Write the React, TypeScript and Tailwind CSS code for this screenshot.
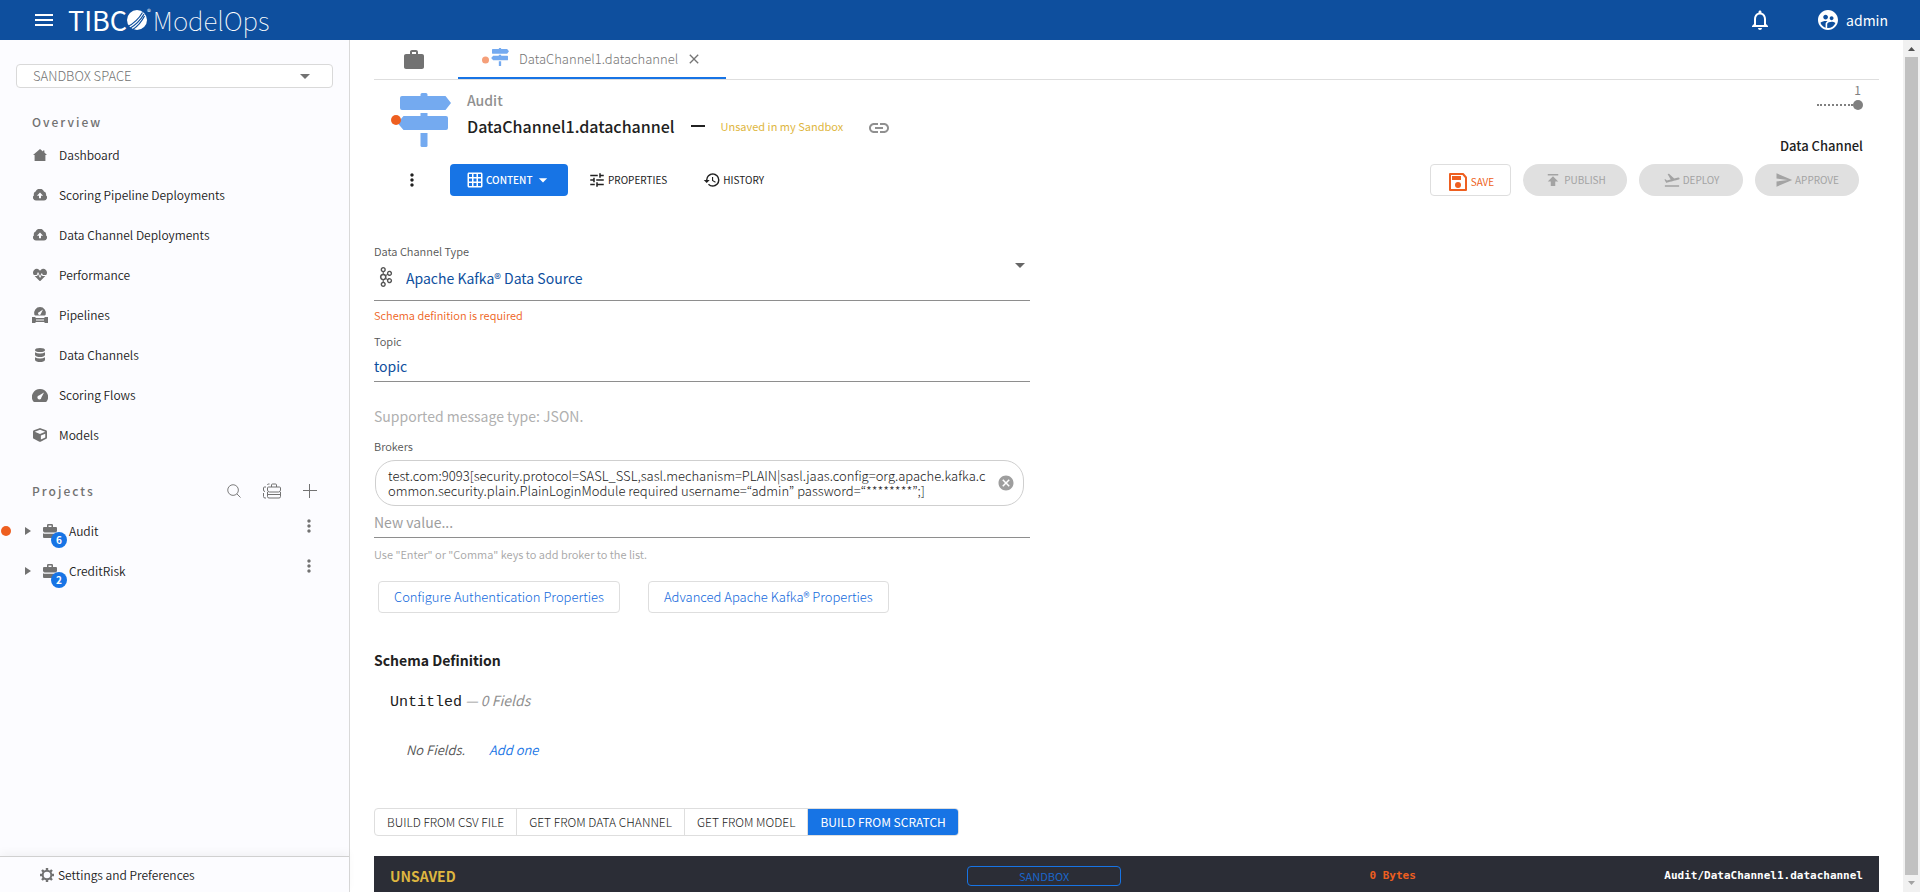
import React, { useState } from 'react';
import {
  MdArrowDropDown,
  MdFlightTakeoff,
  MdGridOn,
  MdHistory,
  MdLink,
  MdMenu,
  MdMoreVert,
  MdNotificationsNone,
  MdPublish,
  MdSend,
  MdSupervisedUserCircle,
  MdTune,
  MdWork,
  MdClose,
  MdCancel,
} from 'react-icons/md';
import { SiApachekafka } from 'react-icons/si';
import { FaHeartbeat, FaCube } from 'react-icons/fa';

type IconProps = { className?: string };

const HomeIcon = ({ className }: IconProps) => (
  <svg viewBox="0 0 14 12" className={className} fill="currentColor">
    <path d="M7 0l3 2.4V1.600h1.400v2L14 6h-1.600v6H1.600V6H0z" />
  </svg>
);

const CloudUpIcon = ({ className }: IconProps) => (
  <svg viewBox="0 0 14 12" className={className} fill="currentColor">
    <path
      fillRule="evenodd"
      d="M3 11.500A3 3 0 0 1 1 6.200 2.800 2.800 0 0 1 2.600 2.600 4.500 4.500 0 0 1 11 2.600 3 3 0 0 1 13 6.200 3 3 0 0 1 11 11.500zM7 3.400L3.900 6.700H6V9.300h2V6.700h2.100z"
    />
  </svg>
);

const GaugeIcon = ({ className }: IconProps) => (
  <svg viewBox="0 0 16 13" className={className} fill="currentColor">
    <path
      fillRule="evenodd"
      d="M8 0a8 8 0 0 1 7 12q-.5 1-1.400 1H2.400Q1.500 13 1 12A8 8 0 0 1 8 0zM12 3.600L7 6.600a2 2 0 1 0 2.400 2z"
    />
  </svg>
);

const PipelineIcon = ({ className }: IconProps) => (
  <svg viewBox="0 0 16 16" className={className} fill="currentColor">
    <path
      fillRule="evenodd"
      d="M8 0a6 6 0 0 1 5.700 7.600q-.3 1-1.200 1H3.500q-.9 0-1.200-1A6 6 0 0 1 8 0zM11 2.600L7.300 5a1.500 1.500 0 1 0 1.700 1.600z"
    />
    <path fillRule="evenodd" d="M0 10h3.500v1h9v-1H16v6h-3.500v-1h-9v1H0zM4 12.500v1h8v-1z" />
  </svg>
);

const DatabaseIcon = ({ className }: IconProps) => (
  <svg viewBox="0 0 10 14" className={className} fill="currentColor">
    <ellipse cx="5" cy="2" rx="5" ry="2" />
    <path d="M0 4.200Q2 5.500 5 5.500T10 4.200V7Q9 9 5 9T0 7z" />
    <path d="M0 9.200Q2 10.500 5 10.500T10 9.200V12Q9 14 5 14T0 12z" />
  </svg>
);

const GearIcon = ({ className }: IconProps) => (
  <svg viewBox="0 0 14 14" className={className} fill="none" stroke="currentColor">
    <circle cx="7" cy="7" r="4.300" strokeWidth="2" />
    <path
      strokeWidth="2.400"
      d="M7 0v2.500M7 11.500V14M0 7h2.500M11.500 7H14M2 2l1.800 1.800M10.200 10.200L12 12M12 2l-1.800 1.800M3.800 10.200L2 12"
    />
  </svg>
);

const BriefcaseIcon = ({ className }: IconProps) => (
  <svg viewBox="0 0 14 14" className={className} fill="currentColor">
    <path
      fillRule="evenodd"
      d="M4 3V1.200Q4 0 5.200 0h3.600Q10 0 10 1.200V3h3q1 0 1 1v3Q13.500 8.500 12 8.500H2Q.5 8.500 0 7V4q0-1 1-1zM5.500 3h3V1.500h-3z"
    />
    <path d="M0 9.200q1 .6 2 .6h10q1 0 2-.6V13q0 1-1 1H1q-1 0-1-1z" />
  </svg>
);

const ProjectsIcon = ({ className }: IconProps) => (
  <svg viewBox="0 0 18 15" className={className} fill="none" stroke="currentColor">
    <path d="M8.500 3.500V1.500q0-1 1-1h3q1 0 1 1v2M5.500 3.500h11q1 0 1 1v2q0 2-2 2h-9q-2 0-2-2v-2q0-1 1-1zM4.500 8.500V13q0 1.500 1.500 1.500h10q1.500 0 1.500-1.500V8.500M4.500 11h13" />
    <path d="M6.500 .5H5.500q-1 0-1 1M3 3.500H1.500q-1 0-1 1v2q0 1.500 1.500 1.500M.5 9.500V13q0 1.500 1.500 1.500h1" />
  </svg>
);

const SearchIcon = ({ className }: IconProps) => (
  <svg viewBox="0 0 15 15" className={className} fill="none" stroke="currentColor">
    <circle cx="6.500" cy="6.500" r="5.700" />
    <path d="M10.600 10.600L14.500 14.500" />
  </svg>
);

const PlusIcon = ({ className }: IconProps) => (
  <svg viewBox="0 0 14 14" className={className} fill="none" stroke="currentColor">
    <path d="M6.500 0v14M0 6.500h14" />
  </svg>
);

const SignBoards = () => (
  <g fill="#74aaf0">
    <path d="M29.500 3V1.500q0-1.500 1.500-1.500h4q1.500 0 1.500 1.500V3h18l5.500 7-5.500 7H11q-2 0-2-2V5q0-2 2-2z" />
    <path d="M29.500 20h7v3H55q2 0 2 2v10q0 2-2 2H12.500l-6-7 6-7h17z" />
    <path d="M29.500 40h7v12.500q0 1.500-1.500 1.500h-4q-1.500 0-1.500-1.500z" />
  </g>
);

const SignpostIcon = ({ className }: IconProps) => (
  <svg viewBox="0 0 60 54" className={className}>
    <SignBoards />
    <circle cx="5" cy="27" r="5" fill="#ee5f20" />
  </svg>
);

const TabSignpostIcon = ({ className }: IconProps) => (
  <svg viewBox="0 0 27 18" className={className}>
    <g transform="translate(7 0) scale(0.333)">
      <SignBoards />
    </g>
    <circle cx="3.500" cy="12" r="3.500" fill="#f59f79" />
  </svg>
);

const SaveIcon = ({ className }: IconProps) => (
  <svg viewBox="0 0 18 18" className={className} fill="currentColor">
    <path d="M1 1h13l3 3.500V17H1z" fill="none" stroke="currentColor" strokeWidth="2" strokeLinejoin="round" />
    <path d="M3 3h9v4H3z" />
    <circle cx="9" cy="12" r="3" />
  </svg>
);

const GlobeMark = ({ className }: IconProps) => (
  <svg viewBox="0 0 20 20" className={className}>
    <circle cx="10" cy="10" r="10" fill="#fff" />
    <path d="M0 17Q10 12 15.500 2.500M2 19Q12 13 17 4M5 20Q13 15 17.500 6" fill="none" stroke="#0e4f9e" strokeWidth="1.200" />
  </svg>
);

const overviewItems = [
  { label: 'Dashboard', icon: <HomeIcon className="w-3.5 h-3" /> },
  { label: 'Scoring Pipeline Deployments', icon: <CloudUpIcon className="w-3.5 h-3" /> },
  { label: 'Data Channel Deployments', icon: <CloudUpIcon className="w-3.5 h-3" /> },
  { label: 'Performance', icon: <FaHeartbeat className="w-3.5 h-3.5" /> },
  { label: 'Pipelines', icon: <PipelineIcon className="w-4 h-4" /> },
  { label: 'Data Channels', icon: <DatabaseIcon className="w-2.5 h-3.5" /> },
  { label: 'Scoring Flows', icon: <GaugeIcon className="w-4 h-[13px]" /> },
  { label: 'Models', icon: <FaCube className="w-3.5 h-3.5" /> },
];

const projects = [
  { name: 'Audit', count: 6, dirty: true },
  { name: 'CreditRisk', count: 2, dirty: false },
];

const schemaSources = ['BUILD FROM CSV FILE', 'GET FROM DATA CHANNEL', 'GET FROM MODEL', 'BUILD FROM SCRATCH'];

const TopBar = () => (
  <header className="h-10 shrink-0 bg-[#0e4f9e] text-white flex items-center justify-between px-8">
    <div className="flex items-center">
      <button aria-label="Menu" className="mr-3">
        <MdMenu className="w-6 h-6" />
      </button>
      <div className="flex items-center">
        <span className="text-[27px] leading-10">TIBC</span>
        <GlobeMark className="w-5 h-5" />
        <span className="text-[8px] leading-3 self-start mt-1.5 mr-0.5">®</span>
        <span className="text-[26px] leading-10 font-thin">ModelOps</span>
      </div>
    </div>
    <div className="flex items-center gap-11">
      <button aria-label="Notifications">
        <MdNotificationsNone className="w-6 h-6" />
      </button>
      <button className="flex items-center gap-1.5">
        <MdSupervisedUserCircle className="w-6 h-6" />
        <span className="text-sm leading-5">admin</span>
      </button>
    </div>
  </header>
);

const Sidebar = () => (
  <aside className="w-[350px] shrink-0 bg-[#fcfcff] border-r border-[#d9d9d9] flex flex-col text-[#727272]">
    <div className="flex-1 pt-6">
      <div className="mx-4 relative">
        <select
          aria-label="Space"
          className="block w-full h-6 pl-4 text-[13px] leading-5 font-light appearance-none bg-white border border-[#d9d9d9] rounded"
        >
          <option>SANDBOX SPACE</option>
        </select>
        <MdArrowDropDown className="absolute right-4 top-0 w-6 h-6 pointer-events-none" />
      </div>

      <h2 className="mt-5 px-8 h-[27px] flex items-center text-xs leading-5 font-medium tracking-[2px]">Overview</h2>
      <nav>
        {overviewItems.map((item) => (
          <a key={item.label} href="#" className="h-10 pl-8 flex items-center">
            <span className="w-4 mr-[11px] flex justify-center">{item.icon}</span>
            <span className="text-xs leading-5 font-[350] text-[#212121]">{item.label}</span>
          </a>
        ))}
      </nav>

      <div className="mt-5 mb-1 px-8 h-8 flex items-center justify-between">
        <h2 className="text-xs leading-5 font-medium tracking-[2px]">Projects</h2>
        <div className="flex items-center gap-[22px]">
          <button aria-label="Search projects">
            <SearchIcon className="w-3.5 h-3.5" />
          </button>
          <button aria-label="All projects">
            <ProjectsIcon className="w-[18px] h-4" />
          </button>
          <button aria-label="Add project">
            <PlusIcon className="w-3.5 h-3.5" />
          </button>
        </div>
      </div>
      {projects.map((project) => (
        <div key={project.name} className="h-10 pr-[30px] flex items-center">
          <span className={project.dirty ? 'w-2.5 h-2.5 ml-px rounded-full bg-[#ee5f20]' : 'w-2.5 h-2.5 ml-px'} />
          <button aria-label="Expand" className="ml-3.5 mr-3">
            <svg viewBox="0 0 6 8" className="w-1.5 h-2" fill="currentColor">
              <path d="M0 0l6 4-6 4z" />
            </svg>
          </button>
          <span className="relative w-[26px]">
            <BriefcaseIcon className="w-3.5 h-3.5" />
            <span className="absolute left-2 top-2 w-4 h-4 rounded-full bg-[#1774e5] text-white text-[10px] leading-4 font-bold text-center">
              {project.count}
            </span>
          </span>
          <span className="flex-1 text-xs leading-5 font-[350] text-[#212121]">{project.name}</span>
          <button aria-label={project.name + ' actions'} className="pb-2.5">
            <MdMoreVert className="w-5 h-5" />
          </button>
        </div>
      ))}
    </div>
    <a
      href="#"
      className="h-9 shrink-0 pl-10 pt-px flex items-center gap-1 border-t border-[#d0d0d0] bg-[#fcfcff] shadow-[0_-4px_8px_rgba(0,0,0,0.04)]"
    >
      <GearIcon className="w-3.5 h-3.5" />
      <span className="text-xs leading-5 font-[350] text-[#212121]">Settings and Preferences</span>
    </a>
  </aside>
);

const TabBar = () => (
  <div className="h-10 border-b border-[#dedede] flex">
    <button aria-label="Projects" className="w-21 pr-1 flex items-center justify-center text-[#727272]">
      <MdWork className="w-6 h-6" />
    </button>
    <div className="w-[268px] border-b-2 border-[#1774e5] flex items-center pl-6 text-[#757575]">
      <TabSignpostIcon className="w-[27px] h-[18px] mb-1 mr-2.5" />
      <span className="text-[13px] leading-5 font-light">DataChannel1.datachannel</span>
      <button aria-label="Close tab" className="ml-2">
        <MdClose className="w-4 h-4" />
      </button>
    </div>
  </div>
);

const FileHeader = () => (
  <div className="flex justify-between pr-4">
    <div className="flex items-start pl-[17px]">
      <SignpostIcon className="mt-[13px] w-[60px] h-[54px]" />
      <div className="pt-2.5 ml-4">
        <div className="text-sm leading-5 font-medium text-[#909090]">Audit</div>
        <div className="mt-0.5 flex items-center">
          <h1 className="text-base leading-7 font-medium text-[#212121]">DataChannel1.datachannel</h1>
          <span className="w-3.5 h-0.5 mx-4 bg-[#212121]" />
          <span className="text-[11px] leading-5 text-[#deb640]">Unsaved in my Sandbox</span>
          <button aria-label="Copy link" className="ml-6 pt-1 text-[#909090]">
            <MdLink className="w-6 h-6" />
          </button>
        </div>
      </div>
    </div>
    <div className="pt-1 flex flex-col items-end">
      <div className="flex flex-col items-end text-[#808080]">
        <span className="text-xs leading-3 pr-0.5">1</span>
        <div className="mt-1 flex items-center">
          <span className="w-9 border-t-2 border-dotted border-[#808080]" />
          <span className="w-2.5 h-2.5 rounded-full bg-[#808080]" />
        </div>
      </div>
      <div className="mt-6 text-[13px] leading-6 font-medium text-[#212121]">Data Channel</div>
    </div>
  </div>
);

const Toolbar = () => {
  const disabledAction =
    'w-26 h-8 rounded-full bg-[#e0e0e0] text-[#a3a3a3] text-[10px] leading-4 flex items-center justify-center gap-0.5';

  return (
    <div className="mt-1.5 pr-5 h-8 flex items-center justify-between text-[10px] leading-4">
      <div className="flex items-center">
        <button aria-label="More" className="mx-7 text-[#212121]">
          <MdMoreVert className="w-5 h-5" />
        </button>
        <button className="w-[118px] h-8 rounded bg-[#1774e5] text-white font-medium flex items-center pl-4">
          <MdGridOn className="w-[18px] h-[18px] mr-0.5" />
          CONTENT
          <MdArrowDropDown className="w-5 h-5" />
        </button>
        <button className="ml-5 flex items-center gap-0.5 text-[#212121]">
          <MdTune className="w-[18px] h-[18px]" />
          PROPERTIES
        </button>
        <button className="ml-9 flex items-center gap-0.5 text-[#212121]">
          <MdHistory className="w-[18px] h-[18px]" />
          HISTORY
        </button>
      </div>
      <div className="flex items-center gap-3">
        <button className="w-[81px] h-8 pt-1 pl-0.5 rounded border border-[#dedede] text-[#ee5f20] flex items-center justify-center gap-1">
          <SaveIcon className="w-[18px] h-[18px]" />
          SAVE
        </button>
        <button disabled className={disabledAction}>
          <MdPublish className="w-[18px] h-[18px]" />
          PUBLISH
        </button>
        <button disabled className={disabledAction}>
          <MdFlightTakeoff className="w-[18px] h-[18px]" />
          DEPLOY
        </button>
        <button disabled className={disabledAction}>
          <MdSend className="w-[18px] h-[18px]" />
          APPROVE
        </button>
      </div>
    </div>
  );
};

const ChannelForm = () => {
  const [topic, setTopic] = useState('topic');
  const [newBroker, setNewBroker] = useState('');

  return (
    <form className="mt-[47px] w-[656px] max-w-full">
      <label htmlFor="channel-type" className="block text-[11px] leading-4 font-[350] text-[#555]">
        Data Channel Type
      </label>
      <div className="relative h-[42px] border-b border-[#8e8e8e] flex items-start">
        <SiApachekafka className="mt-2 w-6 h-5 text-[#555]" />
        <select id="channel-type" className="flex-1 pl-2 h-[38px] text-sm leading-6 appearance-none bg-transparent text-[#0e4f9e]">
          <option>Apache Kafka® Data Source</option>
        </select>
        <MdArrowDropDown className="absolute -right-0.5 -top-1.5 w-6 h-6 text-[#666] pointer-events-none" />
      </div>
      <p className="mt-1.5 text-[11px] leading-4 font-[350] text-[#ee5f20]">Schema definition is required</p>

      <label htmlFor="topic" className="mt-2 block text-[11px] leading-5 font-[350] text-[#555]">
        Topic
      </label>
      <input
        id="topic"
        value={topic}
        onChange={(e) => setTopic(e.target.value)}
        className="block w-full h-[31px] pb-px border-b border-[#8e8e8e] text-sm leading-6 text-[#0e4f9e] outline-none"
      />
      <p className="mt-6 text-sm leading-5 text-[#b0b0b0]">Supported message type: JSON.</p>

      <label htmlFor="brokers" className="mt-2.5 block text-[11px] leading-5 font-[350] text-[#555]">
        Brokers
      </label>
      <div className="mx-px mr-1.5 mt-1 py-[7px] pl-3 pr-2 border border-[#cfcfcf] rounded-[20px] flex items-center">
        <span className="flex-1 mr-2.5 break-all text-[13px] leading-[15px] font-light text-[#212121]">
          test.com:9093[security.protocol=SASL_SSL,sasl.mechanism=PLAIN|sasl.jaas.config=org.apache.kafka.common.security.plain.PlainLoginModule required username=“admin” password=“********”;]
        </span>
        <button type="button" aria-label="Remove broker" className="text-[#9e9e9e]">
          <MdCancel className="w-[18px] h-[18px]" />
        </button>
      </div>
      <input
        id="brokers"
        value={newBroker}
        onChange={(e) => setNewBroker(e.target.value)}
        placeholder="New value..."
        className="block w-full h-8 border-b border-[#8e8e8e] text-sm leading-6 placeholder:text-[#9e9e9e] outline-none"
      />
      <p className="mt-2 text-[11px] leading-4 font-[350] text-[#a6a6a6]">
        Use "Enter" or "Comma" keys to add broker to the list.
      </p>

      <div className="mt-[19px] pl-1 flex gap-7">
        <button type="button" className="h-8 px-[15px] border border-[#dedede] rounded text-[13px] leading-5 font-light text-[#1168dc]">
          Configure Authentication Properties
        </button>
        <button type="button" className="h-8 px-[15px] border border-[#dedede] rounded text-[13px] leading-5 font-light text-[#1168dc]">
          Advanced Apache Kafka® Properties
        </button>
      </div>
    </form>
  );
};

const SchemaDefinition = () => {
  const [source, setSource] = useState('BUILD FROM SCRATCH');

  return (
    <section className="mt-[37px]">
      <h3 className="text-sm leading-5 font-bold text-[#212121]">Schema Definition</h3>
      <p className="mt-5 pl-4 text-sm leading-5 text-[#212121]">
        <span className="text-[15px] font-['Liberation_Mono',monospace]">Untitled</span>{' '}
        <span className="italic text-[#909090]">— 0 Fields</span>
      </p>
      <p className="mt-[27px] pl-8 flex gap-6 text-[13px] leading-5 font-[350] italic text-[#555]">
        No Fields.
        <a href="#" className="text-[#1774e5]">
          Add one
        </a>
      </p>
      <div className="mt-12 flex w-fit h-7 border border-[#dedede] rounded overflow-hidden">
        {schemaSources.map((name) => (
          <button
            key={name}
            onClick={() => setSource(name)}
            className={
              name === source
                ? 'px-3 text-xs leading-5 bg-[#1774e5] text-white'
                : 'px-3 text-xs leading-5 font-light border-r border-[#dedede] text-[#212121]'
            }
          >
            {name}
          </button>
        ))}
      </div>
    </section>
  );
};

const StatusBar = () => (
  <footer className="mt-5 h-10 px-4 bg-[#2b2d36] grid grid-cols-[7fr_154px_9fr] items-center">
    <span className="text-sm leading-5 font-bold text-[#deb640]">UNSAVED</span>
    <span className="h-5 rounded-sm border border-[#1774e5] text-[11px] leading-[18px] text-center text-[#1a66c9]">
      SANDBOX
    </span>
    <div className="flex items-center text-[11px] leading-5 font-bold font-['DejaVu_Sans_Mono',monospace]">
      <span className="flex-1 text-center text-[#ee5f20]">0 Bytes</span>
      <span className="text-white">Audit/DataChannel1.datachannel</span>
    </div>
  </footer>
);

const ScrollTrack = () => (
  <div aria-hidden="true" className="w-[17px] shrink-0 bg-[#f1f1f1] flex flex-col items-center">
    <svg viewBox="0 0 17 17" className="w-[17px] h-[17px]">
      <path d="M5 11l3.500-4 3.500 4z" fill="#505050" />
    </svg>
    <div className="w-[13px] flex-1 bg-[#c1c1c1]" />
    <svg viewBox="0 0 17 17" className="w-[17px] h-[17px]">
      <path d="M5 6l3.500 4L12 6z" fill="#a3a3a3" />
    </svg>
  </div>
);

export default function App() {
  return (
    <div className="h-screen flex flex-col bg-white font-['Noto_Sans_CJK_KR',sans-serif]">
      <TopBar />
      <div className="flex-1 min-h-0 flex">
        <Sidebar />
        <main className="flex-1 min-w-0 px-6 overflow-hidden">
          <TabBar />
          <FileHeader />
          <Toolbar />
          <ChannelForm />
          <SchemaDefinition />
          <StatusBar />
        </main>
        <ScrollTrack />
      </div>
    </div>
  );
}
